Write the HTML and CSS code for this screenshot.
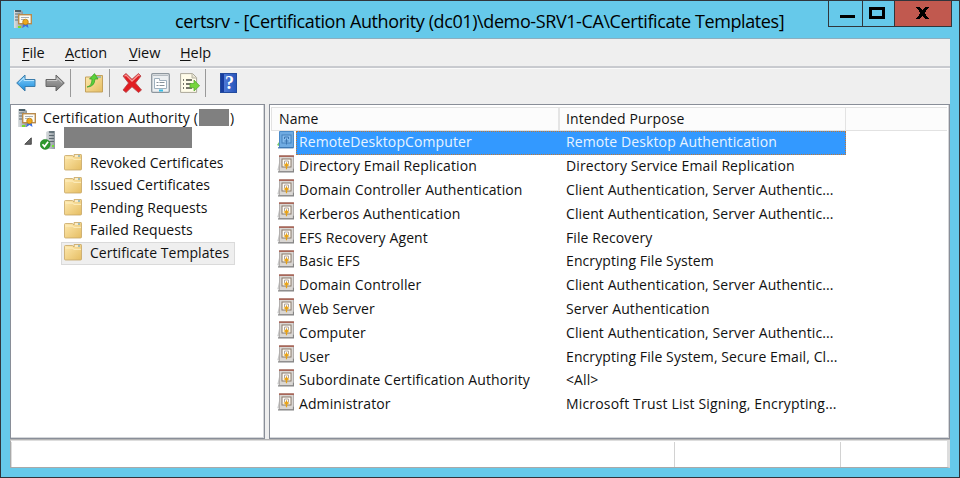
FILE: index.html
```
<!DOCTYPE html>
<html lang="en">
<head>
<meta charset="utf-8">
<title>certsrv</title>
<link rel="stylesheet" href="styles.css">
</head>
<body>
<svg class="defs" width="0" height="0" aria-hidden="true">
  <defs>
    <linearGradient id="gold" x1="0" y1="0" x2="1" y2="1"><stop offset="0" stop-color="#ffeab0"/><stop offset="1" stop-color="#e5bd62"/></linearGradient>
    <linearGradient id="blue" x1="0" y1="0" x2="0" y2="1"><stop offset="0" stop-color="#8ed4fa"/><stop offset="1" stop-color="#1689dc"/></linearGradient>
    <linearGradient id="gray" x1="0" y1="0" x2="0" y2="1"><stop offset="0" stop-color="#b0b0b0"/><stop offset="1" stop-color="#707070"/></linearGradient>
    <linearGradient id="steel" x1="0" y1="0" x2="1" y2="0"><stop offset="0" stop-color="#dce0e2"/><stop offset="1" stop-color="#8e979d"/></linearGradient>
    <symbol id="ca" viewBox="0 0 20 20">
      <path d="M1 1h7l2 2v16H1z" fill="url(#steel)"/><path d="M2 1h6v2H2z" fill="#4d6068"/><path d="M2 5h5M2 8h4M2 11h3" stroke="#5f6c73"/>
      <rect x="5.7" y="5.7" width="12.6" height="9" fill="#fdfcf5" stroke="#b98b4c" stroke-width="1.4"/><path d="M8 8.5h8M8 10.5h4" stroke="#a8afb8"/>
      <path d="M10.5 14l-1 5 3-2 3 2-1-5z" fill="#3b6fe0"/><circle cx="12.5" cy="13" r="2.8" fill="#eda91c" stroke="#b6770d" stroke-width=".7"/><path d="M5 17h3v2H5z" fill="#76df28"/>
    </symbol>
    <symbol id="server" viewBox="0 0 16 19">
      <path d="M6 1l2-1h7v18H6z" fill="url(#steel)"/><path d="M9 1h5" stroke="#52636b" stroke-width="1.5"/><path d="M9 4.5h5M9 7.5h5M9 10.5h5" stroke="#5c6870"/><path d="M12 14h2v2h-2z" fill="#72e431"/>
      <circle cx="5.2" cy="13.4" r="5" fill="#2c982d" stroke="#17791e" stroke-width=".5"/><path d="M2.5 13.3l2 2.3 3.6-4.8" fill="none" stroke="#fff" stroke-width="1.7"/>
    </symbol>
    <symbol id="folder" viewBox="0 0 18 17">
      <path d="M.5 2.5q0-1 1-1h7l1.5 1.4V.5h7q.5 0 .5.7v14q0 .8-1 .8h-15q-1 0-1-1z" fill="url(#gold)" stroke="#c7a665" stroke-width=".8"/>
      <path d="M11 2h3" stroke="#fff"/><path d="M14 2h2" stroke="#4fa3df"/><path d="M1.3 4h7L10 5.3h7" fill="none" stroke="#fff3ca" stroke-width=".9"/>
    </symbol>
    <symbol id="template" viewBox="0 0 17 18">
      <path d="M2 8L.4 15l2 1z" fill="#c8c8c8"/><path d="M2.5 1h14v15.500h-14z" fill="#d9d6d3" stroke="#a3a09e" stroke-width=".8"/><path d="M2 .3h15V2H2z" fill="#a9675a"/>
      <path d="M1 16.800h15.500v-3" fill="none" stroke="#858585" stroke-width="1.200"/>
      <rect x="5" y="4" width="9" height="8" fill="#fffdf8" stroke="#88786b"/><path d="M7.500 9V6h4v3" fill="none" stroke="#b0a6a1"/>
      <path d="M9.500 6.800l1 2.200 2.300 1-2.300 1-.5 3.200-1-0-.5-3.200-2.300-1 2.300-1z" fill="#e5a116"/>
    </symbol>
    <symbol id="template-on" viewBox="0 0 17 18">
      <path d="M0 14l2-3v4z" fill="#77c86a"/><path d="M2.500 .5h14v16h-14z" fill="#6fabe2" stroke="#4b8bc9"/>
      <path d="M1 16.800h15.500" stroke="#3c75b0" stroke-width="1.200"/><rect x="5" y="4" width="9" height="8" fill="#86bdee" stroke="#4480ba"/>
      <path d="M7.500 8V6h4v2M9.500 7.500v6M7.500 10h4" fill="none" stroke="#3d76b2"/>
    </symbol>
  </defs>
</svg>
<div class="window">
  <header class="titlebar">
    <svg class="app-icon"><use href="#ca"/></svg>
    <h1 class="title">certsrv - [Certification Authority (dc01)\demo-SRV1-CA\Certificate Templates]</h1>
    <div class="controls">
      <div class="control minimize"><i></i></div>
      <div class="control maximize"><i></i></div>
      <div class="control close"><svg width="13" height="12" viewBox="0 0 13 12" shape-rendering="crispEdges"><path d="M0 0h4l2.500 3L9 0h4L8.500 6l4.500 6H9L6.500 9 4 12H0l4.500-6z"/></svg></div>
    </div>
  </header>
  <nav class="menubar">
    <span class="menu file"><u>F</u>ile</span><span class="menu action"><u>A</u>ction</span><span class="menu view"><u>V</u>iew</span><span class="menu help"><u>H</u>elp</span>
  </nav>
  <div class="toolbar">
    <svg class="tool back" width="20" height="18" viewBox="0 0 20 18"><path d="M.7 9L9 1v4.500h10v7H9V17z" fill="url(#blue)" stroke="#3b7cab"/><path d="M3 8.500l5-4.500v2.500h10" fill="none" stroke="#b7e5ff"/></svg>
    <svg class="tool forward" width="20" height="18" viewBox="0 0 20 18"><path d="M19.300 9L11 1v4.500H1v7h10V17z" fill="url(#gray)" stroke="#666"/><path d="M2 6.500h10V4l5 4.500" fill="none" stroke="#c9c9c9"/></svg>
    <span class="divider"></span>
    <svg class="tool up" width="18" height="20" viewBox="0 0 18 20"><path d="M.5 4h8l1-1.500h8v16.500H.5z" fill="url(#gold)" stroke="#c3a15d"/><path d="M12 4h4" stroke="#4f9ecf"/><path d="M2 14q5-1 5-8H4.500L9.500.6 13 6h-3q-.5 8-8 8z" fill="#5bd13b" stroke="#319c27" stroke-width=".7"/></svg>
    <span class="divider second"></span>
    <svg class="tool delete" width="20" height="20" viewBox="0 0 20 20"><path d="M1 3l3-2.500 6 5.800L16.500.5 19 3l-5.500 7 6 7-3 2.500L10 13.800 4 19.500 1 17l5.500-7z" fill="#e11d21" stroke="#b34448" stroke-width=".8"/><path d="M2.500 3.200L4 2l6 6 6.500-6 1 1" fill="none" stroke="#f79592" stroke-width="1.300"/></svg>
    <svg class="tool properties" width="19" height="20" viewBox="0 0 19 20"><rect x=".7" y=".7" width="17.600" height="18.600" rx="1" fill="#eceff1" stroke="#8e979e" stroke-width="1.300"/><path d="M2 2.500h15" stroke="#b5bcc2"/><path d="M3.500 5.500h5v2h7v8h-12z" fill="#fff" stroke="#9fb0be"/><path d="M5.500 9.500h2m1 0h5m-8 3h2m1 0h5" stroke="#87929b"/><path d="M8 17.500h4" stroke="#35bce5" stroke-width="2"/></svg>
    <svg class="tool export" width="20" height="20" viewBox="0 0 20 20"><path d="M.6.600h12l4 4v14.800H.6z" fill="#fffce9" stroke="#aaa79a"/><path d="M12 1v4h4" fill="#e5e2d1" stroke="#b8b4a4"/><path d="M3 7h1m2 0h6M3 11h1m2 0h5M3 15h1m2 0h6" stroke="#4b4b42" stroke-width="1.300"/><path d="M10 10.500h4V7l5.600 5.800L14 18v-3.300h-4z" fill="#76d53b" stroke="#4fa52c" stroke-width=".7"/></svg>
    <span class="divider third"></span>
    <span class="tool help-icon">?</span>
  </div>
  <main class="panes">
    <section class="tree">
      <div class="node root"><svg class="ca-icon"><use href="#ca"/></svg><span class="root-label">Certification Authority (</span><span class="mask short"></span><span>)</span></div>
      <div class="node server-node"><svg class="expander" viewBox="0 0 8 8"><path d="M7.300.8v6.500H.8z" fill="#666" stroke="#333" stroke-width=".8"/></svg><svg class="server-icon"><use href="#server"/></svg><span class="mask long"></span></div>
      <div class="node leaf"><svg class="folder"><use href="#folder"/></svg><span>Revoked Certificates</span></div>
      <div class="node leaf"><svg class="folder"><use href="#folder"/></svg><span>Issued Certificates</span></div>
      <div class="node leaf"><svg class="folder"><use href="#folder"/></svg><span>Pending Requests</span></div>
      <div class="node leaf"><svg class="folder"><use href="#folder"/></svg><span>Failed Requests</span></div>
      <div class="node leaf current"><svg class="folder"><use href="#folder"/></svg><span>Certificate Templates</span></div>
    </section>
    <section class="list">
      <div class="head"><span class="head-name">Name</span><span class="head-purpose">Intended Purpose</span></div>
      <div class="row selected"><svg><use href="#template-on"/></svg><div class="cells"><span class="name">RemoteDesktopComputer</span><span>Remote Desktop Authentication</span></div></div>
      <div class="row"><svg><use href="#template"/></svg><div class="cells"><span class="name">Directory Email Replication</span><span>Directory Service Email Replication</span></div></div>
      <div class="row"><svg><use href="#template"/></svg><div class="cells"><span class="name">Domain Controller Authentication</span><span>Client Authentication, Server Authentic...</span></div></div>
      <div class="row"><svg><use href="#template"/></svg><div class="cells"><span class="name">Kerberos Authentication</span><span>Client Authentication, Server Authentic...</span></div></div>
      <div class="row"><svg><use href="#template"/></svg><div class="cells"><span class="name">EFS Recovery Agent</span><span>File Recovery</span></div></div>
      <div class="row"><svg><use href="#template"/></svg><div class="cells"><span class="name">Basic EFS</span><span>Encrypting File System</span></div></div>
      <div class="row"><svg><use href="#template"/></svg><div class="cells"><span class="name">Domain Controller</span><span>Client Authentication, Server Authentic...</span></div></div>
      <div class="row"><svg><use href="#template"/></svg><div class="cells"><span class="name">Web Server</span><span>Server Authentication</span></div></div>
      <div class="row"><svg><use href="#template"/></svg><div class="cells"><span class="name">Computer</span><span>Client Authentication, Server Authentic...</span></div></div>
      <div class="row"><svg><use href="#template"/></svg><div class="cells"><span class="name">User</span><span>Encrypting File System, Secure Email, Cl...</span></div></div>
      <div class="row"><svg><use href="#template"/></svg><div class="cells"><span class="name">Subordinate Certification Authority</span><span>&lt;All&gt;</span></div></div>
      <div class="row"><svg><use href="#template"/></svg><div class="cells"><span class="name">Administrator</span><span class="trust">Microsoft Trust List Signing, Encrypting...</span></div></div>
    </section>
  </main>
  <footer class="status"><span></span><span></span><span></span></footer>
</div>
</body>
</html>
```
FILE: styles.css
```
* { box-sizing: border-box; }
body { margin: 0; overflow: hidden; font: 14px/22px "Open Sans", "Noto Sans", sans-serif; letter-spacing: 0.1px; color: #111; }
svg { display: block; flex: none; }
.defs { position: absolute; }
.window { width: 960px; height: 478px; display: flex; flex-direction: column; padding: 0 9px 9px; background: #66c9ea; border: 1px solid #30343b; }
.titlebar { height: 37px; flex: none; display: flex; align-items: flex-start; }
.app-icon { width: 20px; height: 20px; margin: 8px 0 0 3px; }
.title { flex: 1; margin: 7px 0 0; padding-left: 142px; font-size: 18px; font-weight: 400; line-height: 26px; letter-spacing: -0.4px; white-space: nowrap; color: #000; }
.controls { display: flex; width: 124px; height: 26px; margin-right: -2px; border: 1px solid #30363b; border-top: 0; }
.control { display: flex; align-items: center; justify-content: center; border-right: 1px solid #30363b; }
.minimize { width: 34px; }
.maximize { width: 32px; }
.close { flex: 1; border: 0; background: #c1594f; }
.close svg { margin-right: 2px; margin-top: -1px; }
.minimize i { width: 15px; height: 3px; background: #000; margin-top: 6px; margin-left: 3px; }
.maximize i { width: 16px; height: 12px; border: 3px solid #000; margin-top: -1px; margin-right: 3px; }
.menubar { height: 30px; flex: none; background: #efefef; border-top: 1px solid #8baebf; border-bottom: 2px solid #c8cacf; display: flex; padding: 3px 0 0 12px; font-size: 14.5px; letter-spacing: -0.1px; }
.menu u { text-underline-offset: 2px; text-decoration-thickness: 1px; text-decoration-skip-ink: none; }
.file { width: 43px; }
.action { width: 64px; }
.view { width: 51px; }
.toolbar { height: 36px; flex: none; background: #efefef; border-top: 1px solid #fafafa; display: flex; align-items: flex-start; padding: 4px 0 0 6px; }
.back, .forward { margin-top: 1px; }
.forward { margin-left: 9px; }
.divider { width: 1px; height: 28px; background: #999; margin: -4px 0 0 5px; }
.up { margin-left: 14px; }
.second { margin-left: 6px; }
.delete { margin-left: 12px; }
.properties { margin-left: 9px; }
.export { margin-left: 10px; }
.divider.third { margin-left: 5px; }
.help-icon { width: 17px; height: 20px; margin-left: 14px; background: linear-gradient(90deg, #183d9f 0 3px, #4e79d6 3px, #2955bb); border: 1px solid #234b9e; color: #fff; text-align: center; font: bold 18px/18px "Liberation Serif", serif; padding-left: 2px; }
.panes { height: 336px; flex: none; display: flex; justify-content: space-between; background: #eee; border-bottom: 1px solid #b4b4b4; }
.tree, .list { height: 335px; background: #fff; border: 1px solid #898e98; box-shadow: inset -1px -1px #d5d7da; }
.tree { width: 255px; padding: 2px 0 0 6px; }
.node { height: 22.500px; display: flex; align-items: center; white-space: nowrap; }
.root { letter-spacing: 0.15px; }
.root span { margin-top: -1px; }
.ca-icon { width: 20px; height: 20px; margin-right: 6px; }
.root-label { width: 156px; }
.mask { background: #808080; }
.short { width: 30px; height: 17px; margin-right: 1px; }
.long { width: 128px; height: 21px; margin-left: 8px; margin-top: -6px; }
.expander { width: 8px; height: 8px; margin-left: 7px; }
.server-icon { width: 16px; height: 19px; margin-left: 8px; }
.leaf { margin-left: 44px; width: 174px; padding-left: 2px; border: 1px solid transparent; letter-spacing: 0.05px; }
.leaf span { margin-top: -1px; }
.folder { width: 18px; height: 17px; margin-right: 8px; margin-top: -1px; }
.current { background: #efefef; border-color: #dadada; }
.list { width: 681px; padding: 2px 2px 0 1px; }
.head { height: 24px; display: flex; align-items: center; background: #fcfcfc; border: 1px solid #e2e2e2; border-right: 0; }
.head-name { width: 288px; padding-left: 7px; border-right: 2px solid #e5e5e5; }
.head-purpose { width: 286px; padding-left: 6px; border-right: 1px solid #e3e3e3; }
.row { height: 23.800px; display: flex; padding-left: 6px; }
.row > svg { width: 17px; height: 18px; }
.cells { width: 550px; margin-left: 2px; padding: 0 0 1px 2px; border: 1px solid transparent; display: flex; align-items: center; white-space: nowrap; }
.name { width: 267px; }
.trust { letter-spacing: 0.17px; }
.selected .cells { background: #3399ff; color: #e8f4ff; border: 1px dotted #bf7636; }
.status { height: 28px; flex: none; display: flex; background: #fff; border: 1px solid #a9a9a9; border-top-color: #ddd; border-right-width: 3px; border-right-color: #ddd; padding-top: 1px; }
.status span { border-left: 1px solid #d2d2d2; }
.status span:first-child { width: 663px; border-color: #ddd; }
.status span:nth-child(2) { width: 166px; }
```
